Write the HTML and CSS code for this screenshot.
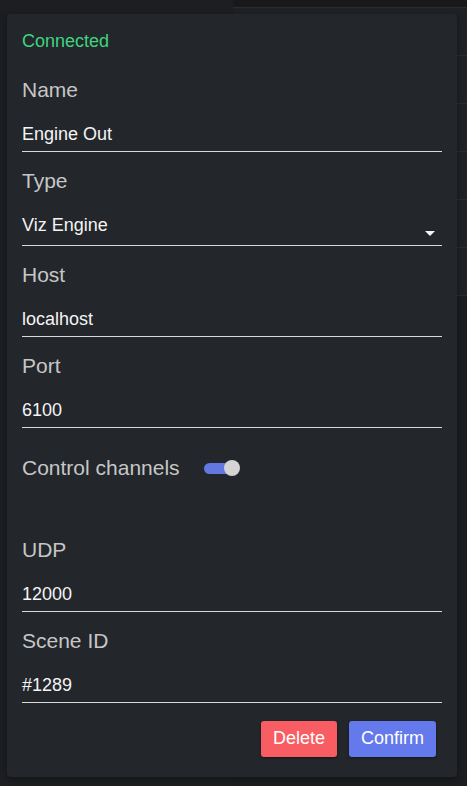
FILE: index.html
```html
<!DOCTYPE html>
<html lang="en">
<head>
<meta charset="utf-8">
<title>Engine Out</title>
<link rel="stylesheet" href="styles.css">
</head>
<body>
<div class="page">
  <div class="side"></div>
  <div class="main">
    <div class="topbar"></div>
    <div class="row"></div>
    <div class="row"></div>
    <div class="row"></div>
    <div class="row"></div>
    <div class="row"></div>
    <div class="row"></div>
  </div>
</div>

<div class="card">
  <div class="status">Connected</div>

  <div class="field first">
    <div class="label">Name</div>
    <div class="value">Engine Out</div>
  </div>

  <div class="field">
    <div class="label">Type</div>
    <div class="value select">
      <span>Viz Engine</span>
      <span class="arrow"></span>
    </div>
  </div>

  <div class="field">
    <div class="label">Host</div>
    <div class="value">localhost</div>
  </div>

  <div class="field">
    <div class="label">Port</div>
    <div class="value">6100</div>
  </div>

  <div class="toggle-row">
    <span class="label">Control channels</span>
    <span class="switch"><span class="track"></span><span class="knob"></span></span>
  </div>

  <div class="field udp">
    <div class="label">UDP</div>
    <div class="value">12000</div>
  </div>

  <div class="field">
    <div class="label">Scene ID</div>
    <div class="value">#1289</div>
  </div>

  <div class="actions">
    <button class="btn delete">Delete</button>
    <button class="btn confirm">Confirm</button>
  </div>
</div>
</body>
</html>
```

FILE: styles.css
```css
html, body {
  margin: 0;
  padding: 0;
}
body {
  width: 467px;
  height: 786px;
  overflow: hidden;
  background: #1d1e21;
  font-family: "Liberation Sans", Arial, sans-serif;
  position: relative;
}
.page {
  display: grid;
  grid-template-columns: 233px 1fr;
  height: 786px;
}
.side {
  background: #1d1e21;
}
.main {
  background: #1c1d20;
}
.topbar {
  height: 7px;
  background: #19191c;
  border-bottom: 1px solid #2b2c2f;
}
.row {
  height: 47px;
  background: #202124;
  border-bottom: 1px solid #2b2c2f;
}

.card {
  position: absolute;
  left: 7px;
  top: 14px;
  width: 450px;
  box-sizing: border-box;
  padding: 15px 15px 20px;
  background: #23262b;
  border-radius: 4px;
  box-shadow: 0 2px 6px rgba(0, 0, 0, 0.35);
}
.status {
  font-size: 18px;
  line-height: 24px;
  color: #3fd47f;
}
.field {
  margin-top: 17px;
}
.field.first {
  margin-top: 25px;
}
.field.udp {
  margin-top: 58px;
}
.label {
  font-size: 21px;
  line-height: 24px;
  color: #c6c6c6;
}
.value {
  font-size: 18px;
  line-height: 20px;
  color: #f4f4f4;
  padding: 22px 0 7px;
  border-bottom: 1px solid #d9d9d9;
}
.value.select {
  display: flex;
  justify-content: space-between;
  align-items: flex-end;
  padding-bottom: 10px;
}
.arrow {
  width: 0;
  height: 0;
  border-left: 5px solid transparent;
  border-right: 5px solid transparent;
  border-top: 5px solid #f4f4f4;
  margin-right: 7px;
  margin-bottom: -1px;
}
.toggle-row {
  display: flex;
  align-items: center;
  margin-top: 28px;
}
.switch {
  display: flex;
  align-items: center;
  margin-left: 24px;
}
.track {
  width: 32px;
  height: 11px;
  border-radius: 6px;
  background: #6278e0;
}
.knob {
  width: 16px;
  height: 16px;
  border-radius: 50%;
  background: #d4d4d4;
  margin-left: -12px;
}
.actions {
  display: flex;
  justify-content: flex-end;
  gap: 12px;
  margin-top: 18px;
  margin-right: 6px;
}
.btn {
  font-family: "Liberation Sans", Arial, sans-serif;
  font-size: 18px;
  line-height: 20px;
  color: #ffffff;
  border: none;
  border-radius: 3px;
  padding: 7px 12px 9px;
  height: 36px;
  box-sizing: border-box;
  box-shadow: 0 1px 3px rgba(0, 0, 0, 0.4);
}
.delete {
  background: #f95d64;
}
.confirm {
  background: #6479eb;
}
```
